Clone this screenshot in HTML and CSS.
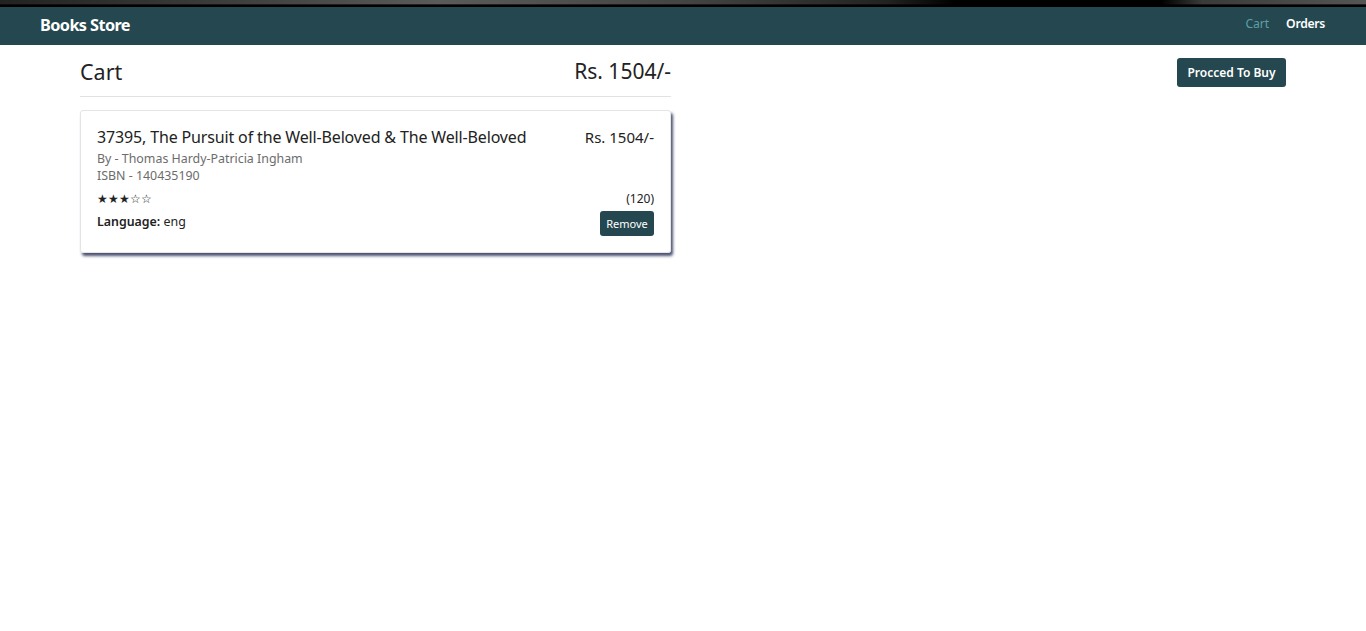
FILE: index.html
```html
<!DOCTYPE html>
<html lang="en">
<head>
<meta charset="utf-8">
<title>Books Store</title>
<link rel="stylesheet" href="styles.css">
</head>
<body>
<div class="topstrip"></div>
<nav class="navbar">
  <a class="brand" href="#">Books Store</a>
  <div class="navlinks">
    <a class="navlink active" href="#">Cart</a>
    <a class="navlink" href="#">Orders</a>
  </div>
</nav>
<main class="page">
  <section class="cart">
    <div class="cart-head">
      <h2 class="cart-title">Cart</h2>
      <h2 class="cart-total">Rs. 1504/-</h2>
    </div>
    <hr class="divider">
    <div class="card">
      <div class="row">
        <h3 class="book-title">37395, The Pursuit of the Well-Beloved &amp; The Well-Beloved</h3>
        <span class="book-price">Rs. 1504/-</span>
      </div>
      <div class="meta first">By - Thomas Hardy-Patricia Ingham</div>
      <div class="meta">ISBN - 140435190</div>
      <div class="row rating-row">
        <span class="stars">★★★☆☆</span>
        <span class="count">(120)</span>
      </div>
      <div class="row lang-row">
        <span class="lang"><b>Language:</b> eng</span>
        <button class="btn btn-small">Remove</button>
      </div>
    </div>
  </section>
  <div class="actions">
    <button class="btn btn-buy">Procced To Buy</button>
  </div>
</main>
</body>
</html>
```
FILE: styles.css
```css
* { box-sizing: border-box; }
html, body { min-height: 100%; }
body {
  margin: 0;
  min-height: 100vh;
  font-family: "Noto Sans", "Open Sans", sans-serif;
  color: #212529;
  background: #fff;
}
.topstrip {
  height: 7px;
  background:
    linear-gradient(180deg, transparent 0%, transparent 55%, #000 70%, #000 100%),
    linear-gradient(90deg, #222 0%, #3a3a3a 15%, #5a5a5a 32%, #444 50%, #222 65%, #000 70%, #000 85%, #3a3a3a 88%, #555 100%);
}
.navbar {
  height: 38px;
  background: #25474f;
  display: flex;
  align-items: center;
  justify-content: space-between;
  padding: 0 41px 0 40px;
}
.brand {
  color: #fff;
  font-weight: 700;
  font-size: 16.3px;
  letter-spacing: -0.6px;
  text-decoration: none;
  margin-top: -2px;
}
.navlinks { display: flex; gap: 17px; margin-top: -6px; }
.navlink {
  color: #fff;
  font-size: 12.2px;
  font-weight: 600;
  letter-spacing: -0.3px;
  text-decoration: none;
}
.navlink.active { color: #5c9fa9; font-weight: 400; letter-spacing: -0.1px; }
.page {
  display: flex;
  justify-content: space-between;
  align-items: flex-start;
  padding: 0 80px 40px;
}
.cart { width: 591px; }
.cart-head {
  display: flex;
  justify-content: space-between;
  align-items: center;
  height: 51px;
  padding-top: 1px;
}
.cart-title, .cart-total {
  margin: 0;
  font-weight: 400;
  font-size: 21.5px;
  color: #222;
}
.cart-total { font-size: 21px; letter-spacing: 0; }
.divider {
  margin: 0;
  border: 0;
  border-top: 1px solid #e2e2e2;
}
.card {
  margin-top: 13px;
  border: 1px solid #e4e4e4;
  border-radius: 3px;
  box-shadow: 2px 3px 3px rgba(45, 50, 90, 0.85);
  padding: 15px 16px 17px 16px;
  height: 143px;
}
.row {
  display: flex;
  justify-content: space-between;
  align-items: center;
}
.book-title {
  margin: 0;
  font-size: 16px;
  font-weight: 400;
  color: #222;
  letter-spacing: -0.15px;
}
.book-price { font-size: 15px; color: #222; }
.meta {
  font-size: 12.4px;
  color: #6c6c6c;
  line-height: 17px;
}
.meta.first { margin-top: 2px; }
.rating-row { margin-top: 6px; }
.stars { font-size: 12px; color: #222; }
.count { font-size: 12px; color: #222; }
.lang-row { margin-top: 4px; align-items: flex-start; }
.lang { font-size: 12.4px; color: #222; margin-top: 2px; }
.lang b { font-weight: 600; }
.btn {
  border: 0;
  background: #25474f;
  color: #fff;
  font-family: inherit;
  border-radius: 3px;
  cursor: pointer;
}
.btn-small {
  font-size: 11px;
  height: 25px;
  width: 54px;
  padding: 0;
}
.actions { padding-top: 13px; }
.btn-buy {
  font-size: 12px;
  font-weight: 600;
  height: 29px;
  width: 109px;
  padding: 0;
}
```
